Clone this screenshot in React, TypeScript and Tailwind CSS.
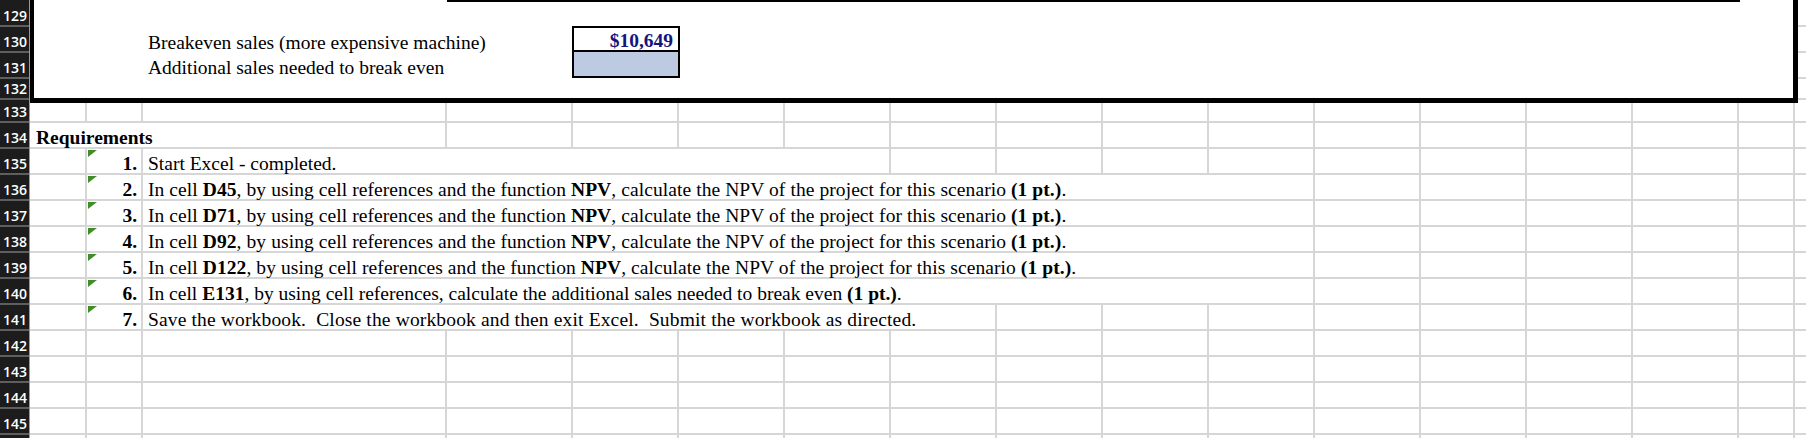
import type { ReactNode } from "react";
import clsx from "clsx";

// grid line colour used by every cell
const line = "border-[#d6d6d6]";

function Cell({
	w,
	children,
	className,
}: {
	w: string;
	children?: ReactNode;
	className?: string;
}) {
	return (
		<div
			className={clsx(
				"relative flex h-full shrink-0 items-end whitespace-pre border-r-2 leading-none",
				line,
				w,
				className,
			)}
		>
			{children}
		</div>
	);
}

function Blank({ count }: { count: number }) {
	return (
		<>
			{Array.from({ length: count }, (_, i) => (
				<Cell key={i} w="w-[106px]" />
			))}
		</>
	);
}

function Tail({ count }: { count: number }) {
	return (
		<>
			<Blank count={count} />
			<Cell w="w-[56px]" />
			<div className="h-full flex-1" />
		</>
	);
}

function Row({ h = "h-[26px]", children }: { h?: string; children: ReactNode }) {
	return <div className={clsx("flex shrink-0 border-b-2", line, h)}>{children}</div>;
}

function Flag() {
	return (
		<svg
			className="absolute left-[1px] top-[1px]"
			width="9"
			height="7"
			viewBox="0 0 9 7"
		>
			<polygon points="0,0 9,0 0,7" fill="#3f8d27" />
		</svg>
	);
}

function Num({ n }: { n: string }) {
	return (
		<Cell w="w-[56px]" className="justify-end pr-[4px] font-bold">
			<Flag />
			{n}
		</Cell>
	);
}

const headerRows: { n: number; h: string }[] = [
	{ n: 129, h: "h-[27px]" },
	{ n: 130, h: "h-[26px]" },
	{ n: 131, h: "h-[26px]" },
	{ n: 132, h: "h-[21px]" },
	{ n: 133, h: "h-[23px]" },
	...[134, 135, 136, 137, 138, 139, 140, 141, 142, 143, 144, 145, 146].map((n) => ({
		n,
		h: "h-[26px]",
	})),
];

function RowHeaders() {
	return (
		<div className="flex w-[30px] shrink-0 flex-col border-r border-[#9a9a9a] bg-[#1c1c1c]">
			{headerRows.map((r) => (
				<div
					key={r.n}
					className={clsx(
						"flex shrink-0 items-end border-b-2 border-[#5e5e5e] pb-[2px] pl-[3px] font-['Open_Sans',sans-serif] text-[14px] font-semibold leading-none text-white",
						r.h,
					)}
				>
					{r.n}
				</div>
			))}
		</div>
	);
}

function TopBox() {
	return (
		<div className="flex h-[103px] shrink-0">
			<div className="flex w-[1768px] shrink-0 flex-col border-b-[5px] border-l-4 border-r-[5px] border-black bg-white">
				<div className="h-[26px] shrink-0">
					<div className="ml-[413px] h-[2px] w-[1293px] bg-black" />
				</div>
				<div className="flex h-[26px] shrink-0">
					<div className="w-[109px] shrink-0" />
					<div className="flex w-[304px] shrink-0 items-end whitespace-nowrap pl-[5px] leading-none">
						Breakeven sales (more expensive machine)
					</div>
					<div className="w-[125px] shrink-0" />
					<div className="flex w-[108px] shrink-0 items-end justify-end border-2 border-black pr-[5px] font-bold leading-none text-[#14147e]">
						$10,649
					</div>
				</div>
				<div className="flex h-[26px] shrink-0">
					<div className="w-[109px] shrink-0" />
					<div className="flex w-[304px] shrink-0 items-end whitespace-nowrap pb-[1px] pl-[5px] leading-none">
						Additional sales needed to break even
					</div>
					<div className="w-[125px] shrink-0" />
					<div className="w-[108px] shrink-0 border-x-2 border-b-2 border-black bg-[#bccbe2]" />
				</div>
			</div>
			<div className="flex flex-1 flex-col">
				<div className={clsx("h-[27px] border-b-2", line)} />
				<div className={clsx("h-[26px] border-b-2", line)} />
				<div className={clsx("h-[26px] border-b-2", line)} />
				<div className={clsx("h-[21px] border-b-2", line)} />
			</div>
		</div>
	);
}

function EmptyRow({ h }: { h?: string }) {
	return (
		<Row h={h}>
			<Cell w="w-[57px]" />
			<Cell w="w-[56px]" />
			<Cell w="w-[304px]" />
			<Cell w="w-[126px]" />
			<Tail count={11} />
		</Row>
	);
}

function NpvRow({ n, cell }: { n: string; cell: string }) {
	return (
		<Row>
			<Cell w="w-[57px]" />
			<Num n={n} />
			<Cell w="w-[1172px]" className="pl-[5px] tracking-[0.08px]">
				<span>
					{"In cell "}
					<b>{cell}</b>
					{", by using cell references and the function "}
					<b>NPV</b>
					{", calculate the NPV of the project for this scenario "}
					<b>(1 pt.)</b>.
				</span>
			</Cell>
			<Tail count={4} />
		</Row>
	);
}

export default function App() {
	return (
		<div className="flex h-[438px] w-[1806px] overflow-hidden bg-white font-['Liberation_Serif',serif] text-[19.5px] text-black">
			<RowHeaders />
			<div className="flex min-w-0 flex-1 flex-col">
				<TopBox />
				<EmptyRow h="h-[20px]" />
				<Row>
					<Cell w="w-[417px]" className="pl-[6px] font-bold">
						Requirements
					</Cell>
					<Cell w="w-[126px]" />
					<Tail count={11} />
				</Row>
				<Row>
					<Cell w="w-[57px]" />
					<Num n="1." />
					<Cell w="w-[748px]" className="pl-[5px]">
						Start Excel - completed.
					</Cell>
					<Tail count={8} />
				</Row>
				<NpvRow n="2." cell="D45" />
				<NpvRow n="3." cell="D71" />
				<NpvRow n="4." cell="D92" />
				<NpvRow n="5." cell="D122" />
				<Row>
					<Cell w="w-[57px]" />
					<Num n="6." />
					<Cell w="w-[1172px]" className="pl-[5px]">
						<span>
							{"In cell "}
							<b>E131</b>
							{", by using cell references, calculate the additional sales needed to break even "}
							<b>(1 pt.)</b>.
						</span>
					</Cell>
					<Tail count={4} />
				</Row>
				<Row>
					<Cell w="w-[57px]" />
					<Num n="7." />
					<Cell w="w-[854px]" className="pl-[5px] tracking-[0.15px]">
						{"Save the workbook.  Close the workbook and then exit Excel.  Submit the workbook as directed."}
					</Cell>
					<Tail count={7} />
				</Row>
				<EmptyRow />
				<EmptyRow />
				<EmptyRow />
				<EmptyRow />
				<EmptyRow />
			</div>
		</div>
	);
}
